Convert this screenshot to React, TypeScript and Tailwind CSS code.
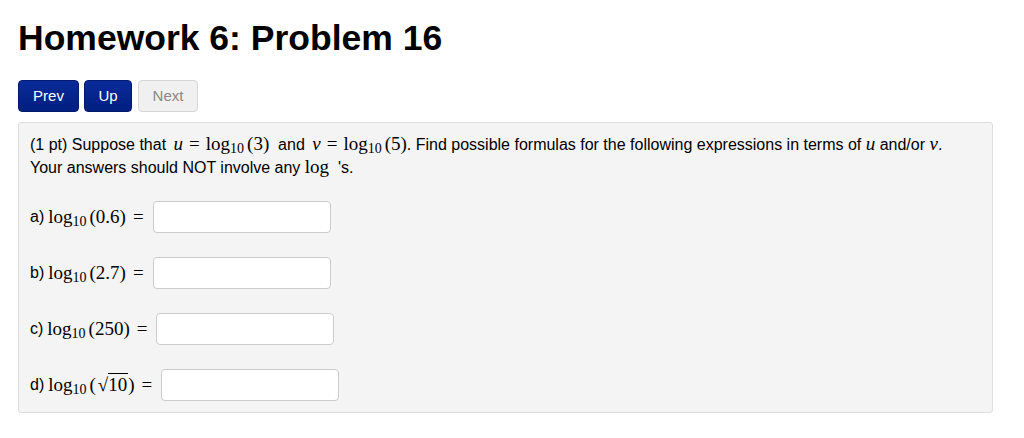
import React from "react";

const serif = { fontFamily: '"Liberation Serif", "Times New Roman", serif' };

function Log({ arg }: { arg: React.ReactNode }) {
  return (
    <span className="text-[19px] whitespace-nowrap" style={serif}>
      log<sub className="text-[14px] relative top-[3px] align-baseline">10</sub>
      <span className="ml-[3px]">({arg})</span>
    </span>
  );
}

function Row({ label, arg }: { label: string; arg: React.ReactNode }) {
  return (
    <div className="flex items-center h-[32px]">
      <span>{label}</span>
      <span className="ml-[4px]">
        <Log arg={arg} />
      </span>
      <span className="ml-[7px] text-[19px]" style={serif}>=</span>
      <input
        type="text"
        className="ml-[9px] w-[178px] h-[32px] bg-white border border-[#cccccc] rounded-[4px]"
      />
    </div>
  );
}

export default function App() {
  return (
    <div className="w-[1024px] h-[438px] bg-white px-[18px] pt-[18px] text-black" style={{ fontFamily: '"Liberation Sans", Arial, sans-serif' }}>
      <h1 className="text-[35.5px] font-bold leading-[40px]">Homework 6: Problem 16</h1>

      <div className="flex gap-[5px] mt-[22px] text-[15px]">
        <button className="w-[61px] h-[32px] rounded-[4px] text-white bg-gradient-to-b from-[#0a2a9a] to-[#021f80] border border-[#011a6e]">Prev</button>
        <button className="w-[48px] h-[32px] rounded-[4px] text-white bg-gradient-to-b from-[#0a2a9a] to-[#021f80] border border-[#011a6e]">Up</button>
        <button className="ml-[1px] w-[60px] h-[32px] rounded-[4px] text-[#888888] bg-[#f0f0f0] border border-[#d6d6d6]">Next</button>
      </div>

      <div className="mt-[10px] w-[975px] h-[291px] bg-[#f4f4f4] border border-[#dedede] rounded-[3px] px-[11px] pt-[10px] text-[16px] leading-[22px]">
        <p>
          (1 pt) Suppose that{" "}
          <span className="text-[19px] ml-[3px]" style={serif}>
            <i>u</i>
            <span className="mx-[6px]">=</span>
            <Log arg="3" />
          </span>{" "}
          &nbsp;and{" "}
          <span className="text-[19px] ml-[3px]" style={serif}>
            <i>v</i>
            <span className="mx-[6px]">=</span>
            <Log arg="5" />
          </span>
          . Find possible formulas for the following expressions in terms of{" "}
          <i className="text-[19px]" style={serif}>u</i> and/or{" "}
          <i className="text-[19px]" style={serif}>v</i>.
          <br />
          Your answers should NOT involve any{" "}
          <span className="text-[19px]" style={serif}>log</span>&nbsp; 's.
        </p>

        <div className="mt-[22px] flex flex-col gap-[24px]">
          <Row label="a)" arg="0.6" />
          <Row label="b)" arg="2.7" />
          <Row label="c)" arg="250" />
          <Row
            label="d)"
            arg={
              <span className="inline-flex items-baseline ml-[2px]">
                <span>√</span>
                <span className="border-t border-black pr-[1px]">10</span>
              </span>
            }
          />
        </div>
      </div>
    </div>
  );
}
